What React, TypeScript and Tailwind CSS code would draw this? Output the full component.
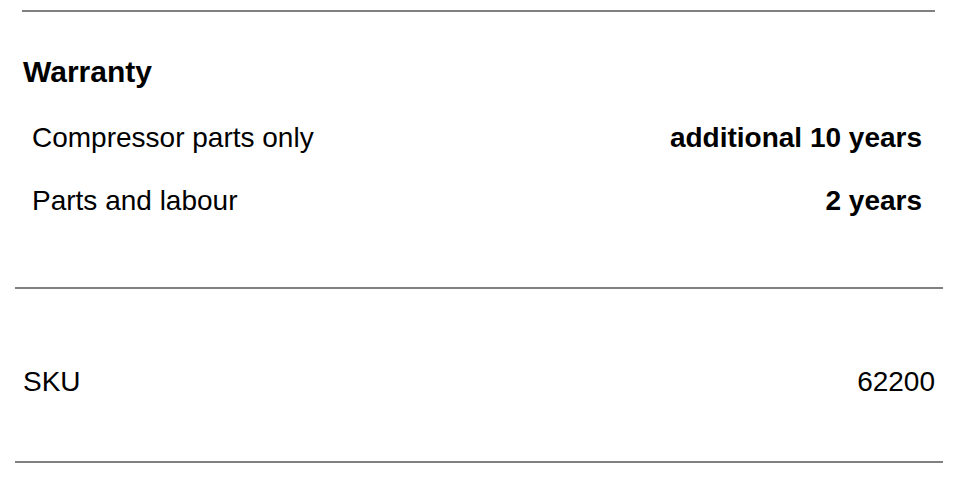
import React from 'react';

interface SpecRow {
    label: string;
    value: string;
}

const warranty: SpecRow[] = [
    { label: 'Compressor parts only', value: 'additional 10 years' },
    { label: 'Parts and labour', value: '2 years' },
];

const App: React.FC = () => {
    return (
        <div className="w-[961px] h-[479px] bg-white text-black font-['Liberation_Sans',Arial,sans-serif]">
            <div className="pl-[22px] pr-[26px] pt-[10px]">
                <div className="border-t-2 border-[#808080]" />
                <h3 className="mt-[44px] ml-px text-[30px] leading-[32px] font-bold">Warranty</h3>
                <div className="mt-[18px]">
                    {warranty.map((row) => (
                        <div key={row.label} className="h-[63px] flex items-center justify-between pl-[10px] pr-[13px] text-[28px] leading-[32px]">
                            <span>{row.label}</span>
                            <span className="font-bold">{row.value}</span>
                        </div>
                    ))}
                </div>
            </div>
            <div className="pl-[15px] pr-[18px] mt-[55px]">
                <div className="border-t-2 border-[#808080]" />
                <div className="flex items-center justify-between px-[8px] pt-[77px] pb-[63px] text-[28px] leading-[32px]">
                    <span>SKU</span>
                    <span>62200</span>
                </div>
                <div className="border-t-2 border-[#808080]" />
            </div>
        </div>
    );
};

export default App;
